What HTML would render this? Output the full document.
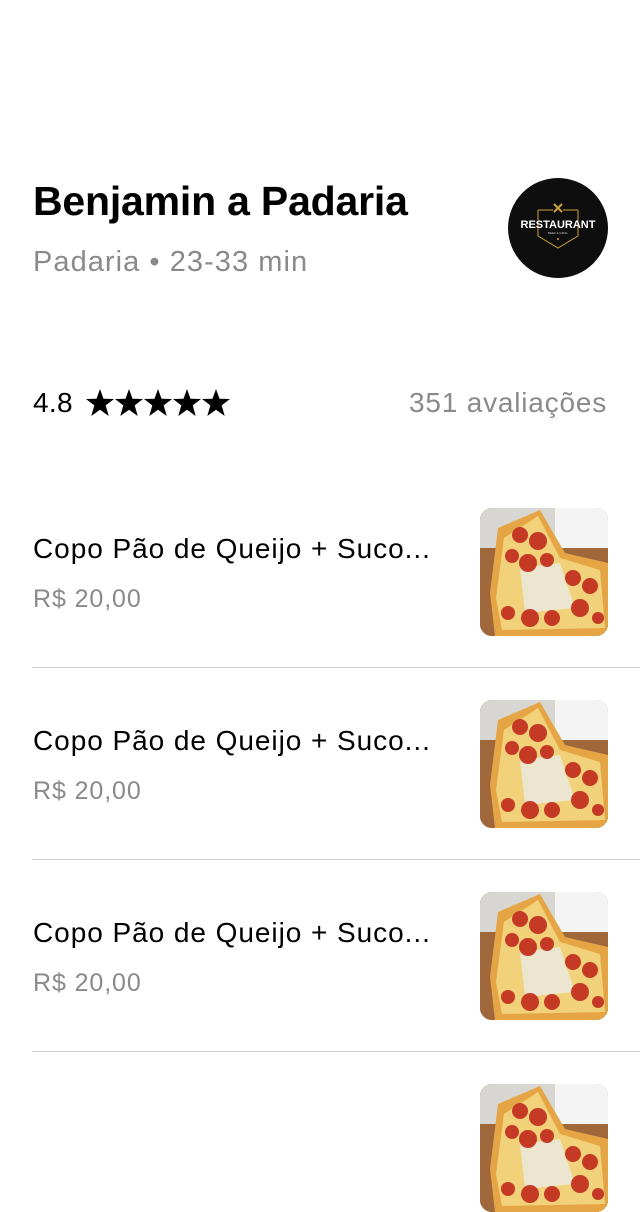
<!DOCTYPE html>
<html><head><meta charset="utf-8"><style>
*{margin:0;padding:0;box-sizing:border-box}
body{width:640px;height:1096px;background:#fff;font-family:"Liberation Sans",sans-serif;position:relative;overflow:hidden}
.a{position:absolute;white-space:nowrap}
.t{left:33px;top:178px;font-size:41px;font-weight:bold;color:#000;letter-spacing:-0.2px}
.s{left:33px;top:246px;font-size:29px;color:#8a8a8a;letter-spacing:1.05px}
.logo{left:508px;top:178px;width:100px;height:100px;border-radius:50%;background:#0e0e0e}
.r{left:33px;top:387px;font-size:28px;color:#000;letter-spacing:0.3px}
.rv{right:33px;top:387px;font-size:28px;color:#8a8a8a;letter-spacing:0.8px}
.it{left:33px;font-size:28px;color:#000;letter-spacing:0.95px}
.pr{left:33px;font-size:25px;color:#8a8a8a;letter-spacing:0.9px}
.img{left:480px;width:128px;height:128px;border-radius:12px;overflow:hidden}
.hr{left:32px;right:0;height:1px;background:#d0d0d0}
</style></head><body>
<div class="a t">Benjamin a Padaria</div>
<div class="a s">Padaria • 23-33 min</div>
<div class="a logo">
<svg width="100" height="100" viewBox="0 0 100 100">
<path d="M30 32 H45 M55 32 H70 M30 32 V58 L50 70 L70 58 V32" stroke="#c9a236" stroke-width="1" fill="none"/>
<path d="M46 26 L54 34 M54 26 L46 34" stroke="#c9a236" stroke-width="2"/>
<text x="50" y="50" text-anchor="middle" font-family="Liberation Sans" font-weight="bold" font-size="11" fill="#fff">RESTAURANT</text>
<text x="50" y="56" text-anchor="middle" font-family="Liberation Sans" font-size="3" fill="#ccc">BEEF &amp; GRILL</text>
<circle cx="50" cy="61" r="1" fill="#c9a236"/>
</svg></div>
<div class="a r">4.8</div>
<svg class="a" style="left:86px;top:389px" width="148" height="28" viewBox="0 0 148 28">
<defs><path id="st" d="M14 0 L17.5 9.8 L28 10 L19.7 16.4 L22.7 27 L14 20.8 L5.3 27 L8.3 16.4 L0 10 L10.5 9.8 Z"/></defs>
<use href="#st" x="0"/><use href="#st" x="29"/><use href="#st" x="58"/><use href="#st" x="87"/><use href="#st" x="116"/>
</svg>
<div class="a rv">351 avaliações</div>

<svg width="0" height="0" style="position:absolute"><defs>
<symbol id="pz" viewBox="0 0 128 128">
<rect width="128" height="128" fill="#8a5a34"/>
<rect x="0" y="0" width="128" height="40" fill="#d8d6d3"/>
<rect x="75" y="0" width="53" height="40" fill="#f4f4f4"/>
<path d="M0 40 H128 V128 H0Z" fill="#a0683a"/>
<path d="M18 20 L60 2 L85 45 L128 55 V128 H15 L10 85 Z" fill="#e6a545"/>
<path d="M24 30 L58 8 L80 50 L120 62 L125 120 L22 122 L16 90 Z" fill="#f1d27a"/>
<path d="M40 60 L80 55 L95 100 L45 105 Z" fill="#ece6d0"/>
<g fill="#c43a24">
<circle cx="40" cy="27" r="8"/><circle cx="58" cy="33" r="9"/><circle cx="48" cy="55" r="9"/><circle cx="32" cy="48" r="7"/>
<circle cx="67" cy="52" r="7"/><circle cx="93" cy="70" r="8"/><circle cx="110" cy="78" r="8"/><circle cx="100" cy="100" r="9"/>
<circle cx="50" cy="110" r="9"/><circle cx="72" cy="110" r="8"/><circle cx="28" cy="105" r="7"/><circle cx="118" cy="110" r="6"/>
</g></symbol></defs></svg>

<div class="a it" style="top:533px">Copo Pão de Queijo + Suco...</div>
<div class="a pr" style="top:585px">R$ 20,00</div>
<div class="a img" style="top:508px"><svg width="128" height="128"><use href="#pz"/></svg></div>
<div class="a hr" style="top:667px"></div>

<div class="a it" style="top:725px">Copo Pão de Queijo + Suco...</div>
<div class="a pr" style="top:777px">R$ 20,00</div>
<div class="a img" style="top:700px"><svg width="128" height="128"><use href="#pz"/></svg></div>
<div class="a hr" style="top:859px"></div>

<div class="a it" style="top:917px">Copo Pão de Queijo + Suco...</div>
<div class="a pr" style="top:969px">R$ 20,00</div>
<div class="a img" style="top:892px"><svg width="128" height="128"><use href="#pz"/></svg></div>
<div class="a hr" style="top:1051px"></div>

<div class="a img" style="top:1084px"><svg width="128" height="128"><use href="#pz"/></svg></div>
</body></html>
